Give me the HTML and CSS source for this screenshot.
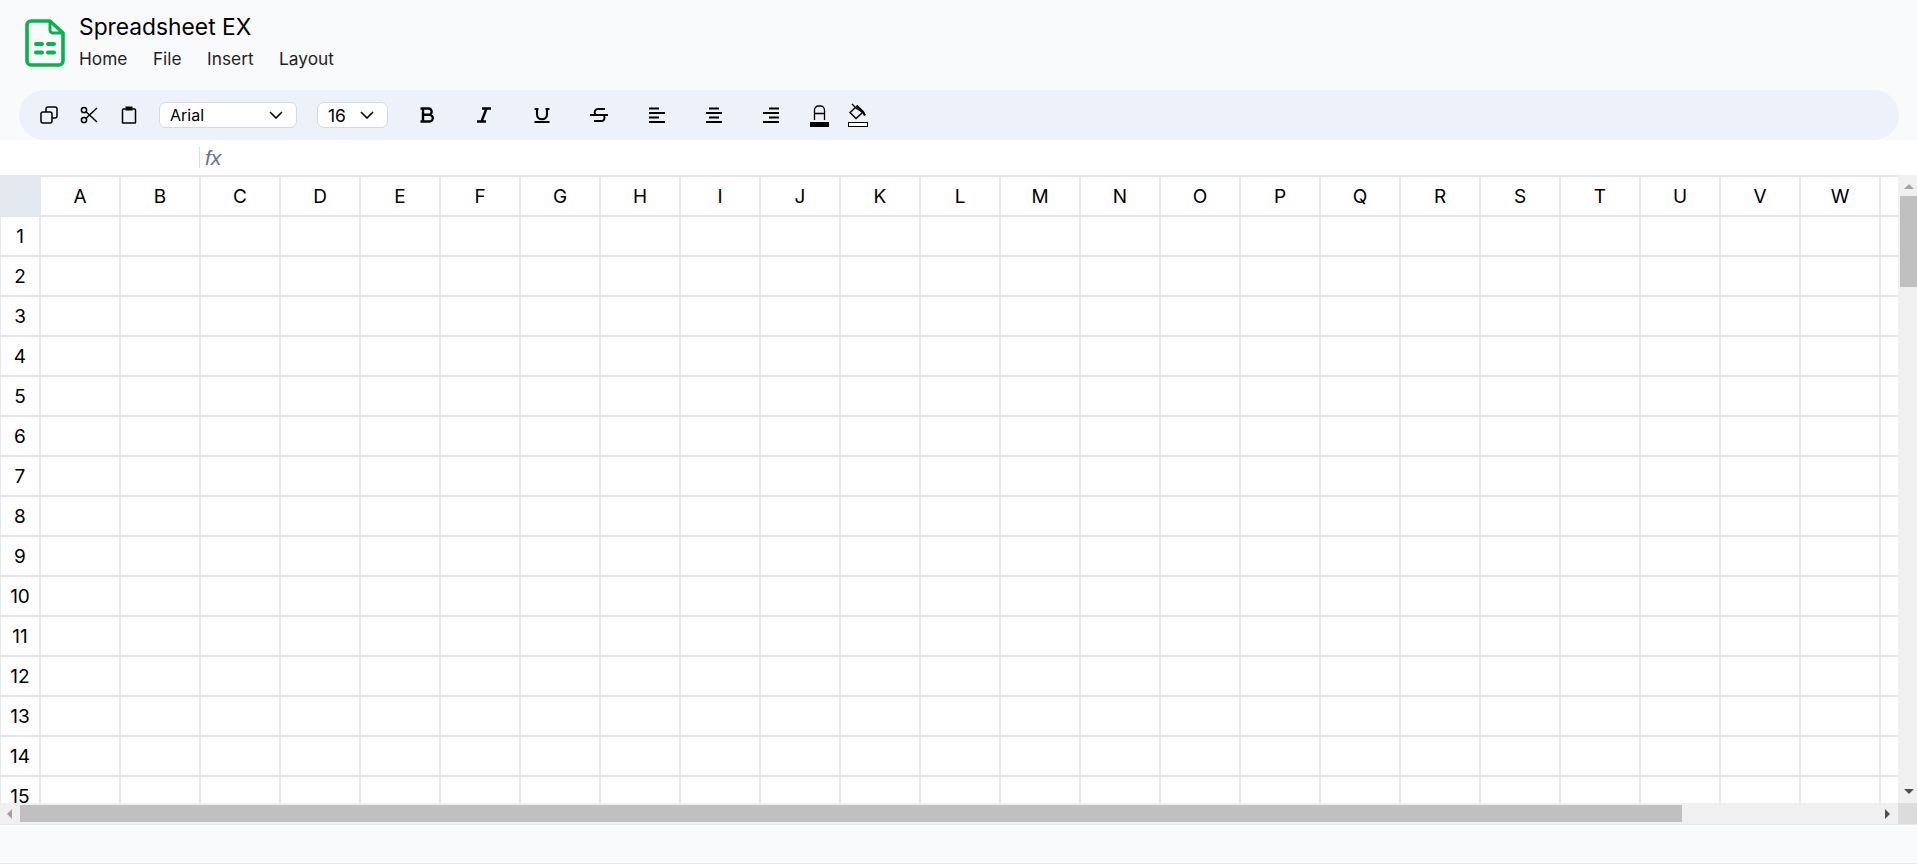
FILE: index.html
```html
<!DOCTYPE html>
<html lang="en">
<head>
    <meta charset="UTF-8">
    <title>Spreadsheet EX</title>
    <link rel="stylesheet" href="styles.css">
</head>
<body>
    <header class="app-header">
        <svg class="app-logo" viewBox="0 0 40 48" width="40" height="48">
            <path d="M6 2h19l13 12v28a4 4 0 0 1-4 4H6a4 4 0 0 1-4-4V6a4 4 0 0 1 4-4z" fill="none" stroke="#0bb14f" stroke-width="3.6" stroke-linejoin="round"/>
            <path d="M25 2v9a3 3 0 0 0 3 3h10" fill="none" stroke="#0bb14f" stroke-width="3" stroke-linejoin="round"/>
            <path d="M11 25h6M23 25h6M11 33.500h6M23 33.500h6" fill="none" stroke="#0bb14f" stroke-width="4" stroke-linecap="round"/>
        </svg>
        <div class="app-heading">
            <div class="app-title">Spreadsheet EX</div>
            <nav class="app-menu">
                <span>Home</span>
                <span>File</span>
                <span>Insert</span>
                <span>Layout</span>
            </nav>
        </div>
    </header>

    <div class="toolbar">
        <svg class="tool tool-copy" viewBox="0 0 18 18"><rect x="1" y="6" width="11" height="11" rx="2"/><path d="M6 6V3a2 2 0 0 1 2-2h7a2 2 0 0 1 2 2v7a2 2 0 0 1-2 2h-3"/></svg>
        <svg class="tool tool-cut" viewBox="0 0 18 18"><circle cx="4" cy="4" r="2.600"/><circle cx="4" cy="14" r="2.600"/><path d="M6 5.800 17 16M6 12.200 17 2"/></svg>
        <svg class="tool tool-paste" viewBox="0 0 18 18"><path d="M6 3H3.500a1 1 0 0 0-1 1v12.500a.5.5 0 0 0 .5.500h12a.5.5 0 0 0 .5-.5V4a1 1 0 0 0-1-1H12"/><rect x="6" y="1" width="6" height="3" fill="#000" stroke-width="1"/></svg>
        <div class="select select-font">
            <span>Arial</span>
            <svg class="chevron" viewBox="0 0 14 8"><path d="M1 1l6 6 6-6"/></svg>
        </div>
        <div class="select select-size">
            <span>16</span>
            <svg class="chevron" viewBox="0 0 14 8"><path d="M1 1l6 6 6-6"/></svg>
        </div>
        <svg class="tool tool-bold" viewBox="0 0 14 16"><path d="M.5 1.500h8a3 3 0 0 1 0 6.300H3M3 7.800h6.500a3.300 3.300 0 0 1 0 6.700H.5M3 1.500v13"/></svg>
        <svg class="tool tool-italic" viewBox="0 0 14 16"><path d="M5 1.500h9M0 14.500h9M9.500 1.500l-5 13"/></svg>
        <svg class="tool tool-underline" viewBox="0 0 16 16"><path d="M.5 2h4M11.500 2h4M3 2v5.500a5 4.800 0 0 0 10 0V2M.5 15h15"/></svg>
        <svg class="tool tool-strike" viewBox="0 0 18 16"><path d="M15 2H8a3.300 3.300 0 0 0-2.500 5.500M0 8h18M4 14h8a3.300 3.300 0 0 0 2-5"/></svg>
        <svg class="tool tool-align" viewBox="0 0 16 16"><path d="M0 1.500h10M0 6h16M0 10.500h10M0 15h16"/></svg>
        <svg class="tool tool-align" viewBox="0 0 16 16"><path d="M3 1.500h10M0 6h16M3 10.500h10M0 15h16"/></svg>
        <svg class="tool tool-align tool-align-last" viewBox="0 0 16 16"><path d="M6 1.500h10M0 6h16M6 10.500h10M0 15h16"/></svg>
        <svg class="tool tool-color" viewBox="0 0 19 24"><path d="M4.500 17V7a4 4 0 0 1 4-4h2a4 4 0 0 1 4 4v10M4.500 10.500h10" stroke-width="1.300"/><rect x="0" y="19" width="19" height="5" fill="#000" stroke="none"/></svg>
        <svg class="tool tool-fill" viewBox="0 0 20 24"><path d="M7.500 4.500 2 9.500l6 6 6.500-6zM4 1l5 5" stroke-width="1.400"/><path d="M8.500 2.500 15 9l2 3.500" stroke-width="2.200"/><rect x=".5" y="19.500" width="19" height="4" fill="#fff" stroke-width="1"/></svg>
    </div>

    <div class="formula-bar">
        <div class="name-box"></div>
        <span class="fx">fx</span>
    </div>

    <main class="sheet">
        <div class="sheet-view">
            <table class="grid" id="grid"></table>
        </div>
        <div class="scroll-v">
            <span class="arrow arrow-up"></span>
            <div class="thumb-v"></div>
            <span class="arrow arrow-down"></span>
        </div>
        <div class="scroll-h">
            <span class="arrow arrow-left"></span>
            <div class="thumb-h"></div>
            <span class="arrow arrow-right"></span>
        </div>
        <div class="scroll-corner"></div>
    </main>

    <footer class="status-bar"></footer>

    <script>
        function createGrid() {
            const grid = document.getElementById('grid');
            const letters = 'ABCDEFGHIJKLMNOPQRSTUVW';
            // one blank column more than there are letters, it runs under the scrollbar
            for (let row = 0; row <= 15; row++) {
                const tr = document.createElement('tr');
                for (let col = 0; col <= letters.length + 1; col++) {
                    const cell = document.createElement(row === 0 || col === 0 ? 'th' : 'td');
                    if (row === 0 && col === 0) {
                        cell.classList.add('corner');
                    } else if (row === 0) {
                        cell.textContent = letters[col - 1] || '';
                    } else if (col === 0) {
                        cell.textContent = row;
                    }
                    tr.appendChild(cell);
                }
                grid.appendChild(tr);
            }
        }

        createGrid();
    </script>
</body>
</html>
```

FILE: styles.css
```css
body {
    font-family: 'Inter', 'Liberation Sans', sans-serif;
    margin: 0;
    height: 864px;
    overflow: hidden;
    display: flex;
    flex-direction: column;
    background-color: #f9fafc;
    color: #000;
}

.app-header {
    height: 90px;
    box-sizing: border-box;
    padding: 16px 0 0 25px;
    display: flex;
    gap: 14px;
}
.app-logo {
    margin-top: 3px;
}
.app-heading {
    display: flex;
    flex-direction: column;
}
.app-title {
    font-size: 22.800px;
    line-height: 22px;
}
.app-menu {
    display: flex;
    gap: 25.500px;
    font-size: 17.300px;
    line-height: 20px;
    margin-top: 11px;
    color: #1f1f1f;
}

.toolbar {
    height: 50px;
    margin: 0 18px 0 19px;
    padding: 0 0 0 21px;
    border-radius: 25px;
    background-color: #edf2fa;
    display: flex;
    align-items: center;
}
.tool {
    fill: none;
    stroke: #000;
    stroke-width: 1.5;
    flex: none;
}
.tool-copy, .tool-cut, .tool-paste {
    width: 18px;
    height: 18px;
    margin-right: 22px;
}
.tool-paste {
    margin-right: 21px;
}
.select {
    height: 26px;
    box-sizing: border-box;
    background-color: #fff;
    border: 1px solid #d5d9e2;
    border-radius: 7px;
    display: flex;
    align-items: center;
    justify-content: space-between;
    font-size: 16px;
    padding: 0 13px 0 10px;
}
.select-font {
    width: 138px;
    margin-right: 20px;
}
.select-size {
    width: 71px;
    margin-right: 32px;
    font-size: 17.500px;
}
.chevron {
    width: 14px;
    height: 8px;
    fill: none;
    stroke: #000;
    stroke-width: 1.6;
}
.tool-bold, .tool-italic {
    width: 14px;
    height: 16px;
    stroke-width: 2.400;
    margin-right: 43px;
}
.tool-underline {
    width: 16px;
    height: 16px;
    stroke-width: 2.100;
    margin-right: 40px;
}
.tool-strike {
    width: 18px;
    height: 16px;
    stroke-width: 2;
    margin-right: 41px;
}
.tool-align {
    width: 16px;
    height: 16px;
    stroke-width: 2;
    margin-right: 41px;
}
.tool-align-last {
    margin-right: 31px;
}
.tool-color {
    width: 19px;
    height: 24px;
    margin-right: 19px;
}
.tool-fill {
    width: 20px;
    height: 24px;
}

.formula-bar {
    height: 35px;
    background-color: #fff;
    display: flex;
    align-items: center;
}
.name-box {
    width: 199px;
    height: 21px;
    border-right: 1px solid #d8dde6;
}
.fx {
    margin-left: 5px;
    font-family: 'Liberation Sans', sans-serif;
    font-style: italic;
    font-size: 21px;
    color: #64748b;
}

.sheet {
    height: 649px;
    background-color: #fff;
    display: grid;
    grid-template-columns: 1898px 19px;
    grid-template-rows: 628px 21px;
    border-bottom: 1px solid #e5e7eb;
}
.sheet-view {
    overflow: hidden;
}
.grid {
    border-collapse: collapse;
    table-layout: fixed;
    width: 1960px;
    margin-left: -1px;
    background-color: #fff;
}
.grid th, .grid td {
    width: 80px;
    height: 40px;
    padding: 0;
    box-sizing: border-box;
    border: 2px solid #e5e7eb;
    font-size: 19px;
    font-weight: 400;
    text-align: center;
}
.grid tr th:first-child {
    width: 40px;
}
.grid .corner {
    background-color: #e2e8f0;
}

.scroll-v, .scroll-h {
    background-color: #f0f0f0;
    position: relative;
    display: flex;
}
.scroll-v {
    flex-direction: column;
    align-items: center;
    padding-left: 2px;
}
.thumb-v {
    width: 17px;
    height: 91px;
    margin-top: 7px;
    background-color: #c0c0c0;
}
.scroll-h {
    align-items: center;
}
.thumb-h {
    width: 1662px;
    height: 17px;
    background-color: #c0c0c0;
}
.scroll-corner {
    background-color: #dcdcdc;
}
.arrow {
    display: block;
    width: 0;
    height: 0;
    border-style: solid;
    border-color: transparent;
}
.arrow-up {
    margin-top: 9px;
    border-width: 0 5px 5px;
    border-bottom-color: #a3a3a3;
}
.arrow-down {
    position: absolute;
    bottom: 9px;
    border-width: 5px 5px 0;
    border-top-color: #505050;
}
.arrow-left {
    margin-left: 7px;
    margin-right: 8px;
    border-width: 5px 5px 5px 0;
    border-right-color: #a3a3a3;
}
.arrow-right {
    position: absolute;
    right: 8px;
    border-width: 5px 0 5px 5px;
    border-left-color: #505050;
}

.status-bar {
    height: 39px;
    border-bottom: 1px solid #e5e7eb;
    box-sizing: border-box;
}
```
